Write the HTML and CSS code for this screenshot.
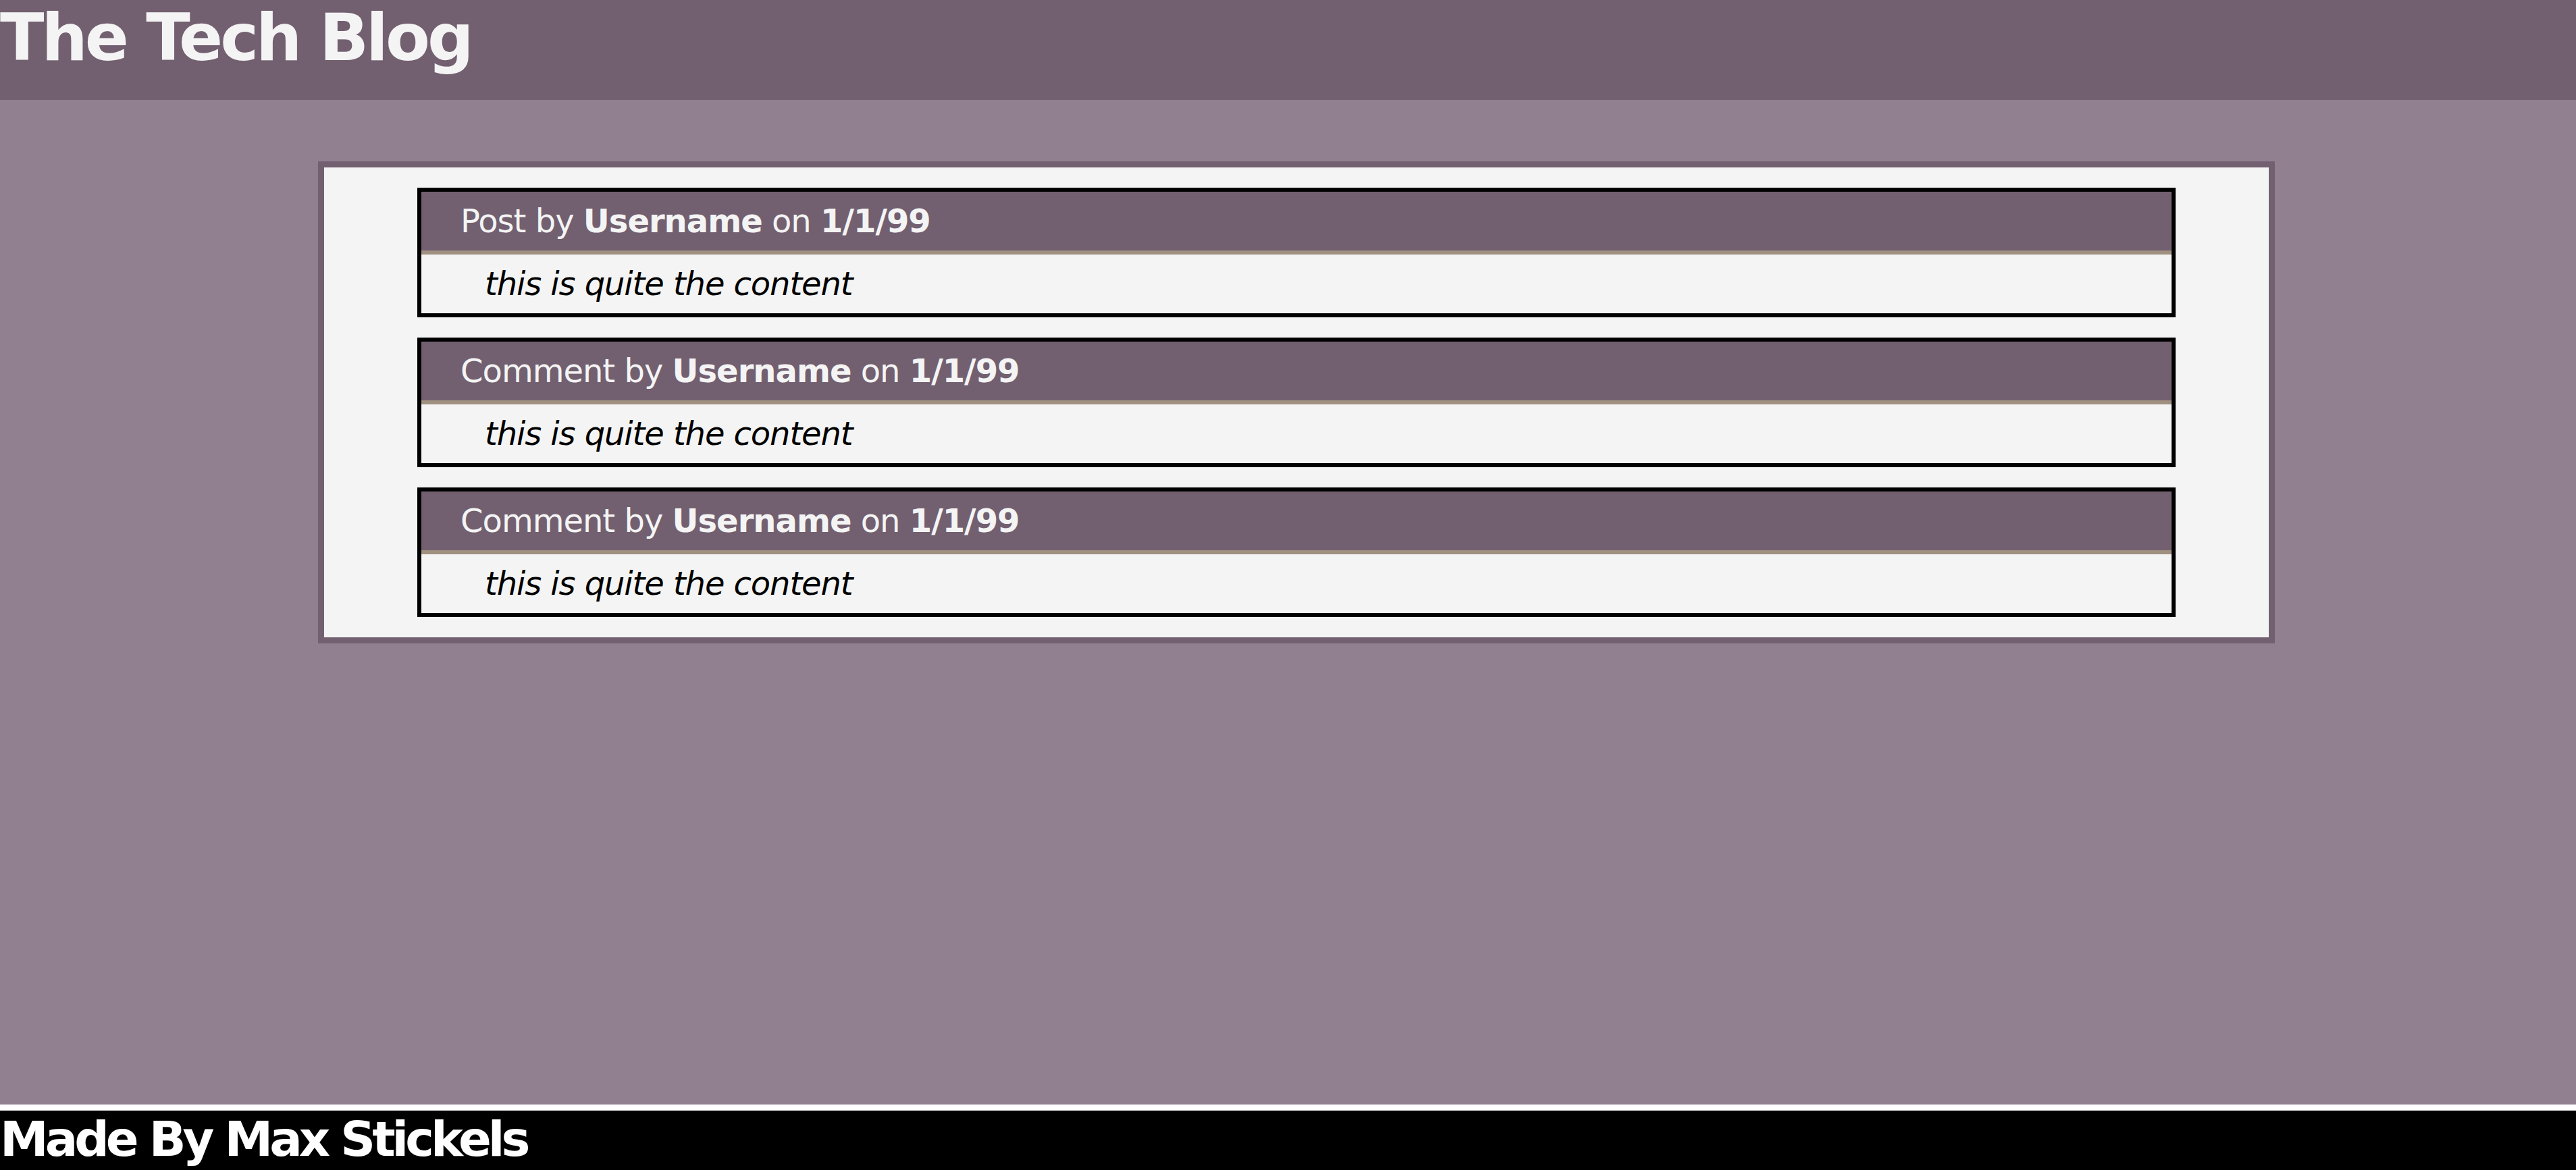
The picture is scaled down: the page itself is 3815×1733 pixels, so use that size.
FILE: index.html
```html
<!DOCTYPE html>
<html lang="en">
<head>
<meta charset="utf-8">
<title>The Tech Blog</title>
<link rel="stylesheet" href="styles.css">
</head>
<body>
<div class="page">
  <header class="site-header">
    <h1 class="site-title">The Tech Blog</h1>
  </header>
  <main class="main">
    <section class="thread">
      <article class="card">
        <div class="card-head">Post by <b>Username</b> on <b>1/1/99</b></div>
        <div class="card-body">this is quite the content</div>
      </article>
      <article class="card">
        <div class="card-head">Comment by <b>Username</b> on <b>1/1/99</b></div>
        <div class="card-body">this is quite the content</div>
      </article>
      <article class="card">
        <div class="card-head">Comment by <b>Username</b> on <b>1/1/99</b></div>
        <div class="card-body">this is quite the content</div>
      </article>
    </section>
  </main>
  <footer class="site-footer">
    <h2 class="footer-text">Made By Max Stickels</h2>
  </footer>
</div>
</body>
</html>
```
FILE: styles.css
```css
html, body {
  margin: 0;
  padding: 0;
}
body {
  font-family: "DejaVu Sans", "Liberation Sans", sans-serif;
  background: #918090;
  color: #000;
}
.page {
  display: flex;
  flex-direction: column;
  min-height: 100vh;
}
.site-header {
  background: #726070;
  height: 148px;
}
.site-title {
  margin: 0;
  font-size: 96px;
  font-weight: bold;
  letter-spacing: -4px;
  color: #f4f4f4;
  line-height: normal;
}
.main {
  flex: 1;
}
.thread {
  margin: 91px 446px 0 471px;
  border: 9px solid #726070;
  background: #f4f4f4;
  padding: 0;
  overflow: hidden;
}
.card {
  width: 90%;
  margin: 30px auto;
  border: 6px solid #000;
  background: #f4f4f4;
}
.card-head {
  background: #726070;
  color: #f4f4f4;
  font-size: 48px;
  letter-spacing: -1px;
  line-height: 56px;
  padding: 15px 0 16px 58px;
  border-bottom: 6px solid #a09080;
}
.card-body {
  font-size: 48px;
  font-style: italic;
  letter-spacing: -1.1px;
  line-height: 56px;
  padding: 15px 0 16px 94px;
}
.site-footer {
  border-top: 9px solid #fff;
  background: #000;
  height: 88px;
}
.footer-text {
  margin: 0;
  font-size: 72px;
  font-weight: bold;
  letter-spacing: -5px;
  color: #fff;
  line-height: normal;
}
```
